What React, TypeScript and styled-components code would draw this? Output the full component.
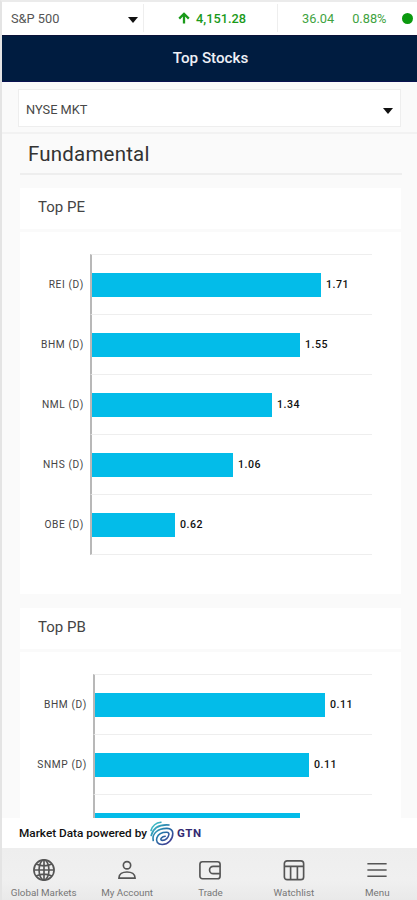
import React from 'react';
import styled, { createGlobalStyle } from 'styled-components';

const GlobalStyle = createGlobalStyle`
  * {
    box-sizing: border-box;
  }

  body {
    margin: 0;
    background: #fafafa;
    font-family: Roboto, 'Liberation Sans', sans-serif;
    color: #333;
  }
`;

const Screen = styled.div`
  display: flex;
  flex-direction: column;
  height: 900px;
  border-left: 2px solid #e4e4e4;
  border-top: 2px solid #ebebeb;
  background: #fafafa;
  overflow: hidden;
  white-space: nowrap;
`;

const Ticker = styled.div`
  display: flex;
  flex: none;
  height: 33px;
  padding: 2px 0 3px;
  background: #fff;
`;

const IndexPicker = styled.div`
  display: flex;
  align-items: center;
  justify-content: space-between;
  width: 142px;
  padding: 1px 5px 0 9px;
  border-right: 1px solid #eee;
  color: #555;
  font-size: 12.8px;
`;

const Caret = styled.span`
  width: 0;
  height: 0;
  margin-top: 2px;
  border: 5px solid transparent;
  border-top: 6px solid #111;
  border-bottom: 0;
`;

const LastPrice = styled.div`
  display: flex;
  align-items: center;
  gap: 6px;
  width: 134px;
  padding-left: 34px;
  border-right: 1px solid #eee;
  color: #1a9a1a;
  font-weight: 500;
  font-size: 12.8px;
`;

const Change = styled.div`
  display: flex;
  align-items: center;
  padding-left: 24px;
  color: #3fa33f;
  font-size: 12.8px;
`;

const Percent = styled.span`
  margin-left: 18px;
`;

const StatusDot = styled.span`
  width: 11px;
  height: 11px;
  margin-left: 16px;
  border-radius: 50%;
  background: #0b990f;
`;

const Header = styled.header`
  display: flex;
  flex: none;
  align-items: center;
  justify-content: center;
  height: 47px;
  padding: 0 0 1px 2px;
  border-top: 1px solid #0a1238;
  border-bottom: 1px solid #0a1250;
  background: #001c40;
  color: #eef0f6;
  font-size: 15.2px;
  font-weight: 500;
`;

const Filter = styled.div`
  flex: none;
  padding: 7px 16px 5px;
  border-bottom: 2px solid #f2f2f2;
`;

const MarketSelect = styled.div`
  display: flex;
  align-items: center;
  justify-content: space-between;
  height: 38px;
  padding: 3px 7px 0;
  border: 1px solid #eee;
  background: #fff;
  color: #484848;
  font-size: 12.8px;
`;

const SectionTitle = styled.h2`
  flex: none;
  height: 41px;
  margin: 0 15px 13px 18px;
  padding-left: 8px;
  border-bottom: 2px solid #eee;
  font-size: 20.5px;
  font-weight: 400;
  line-height: 41px;
  letter-spacing: 0.2px;
`;

const Content = styled.main`
  flex: 1;
  min-height: 0;
  padding: 0 16px 0 18px;
  overflow: hidden;
`;

const Card = styled.section`
  height: 406px;
  margin-bottom: 14px;
  background: #fff;
`;

const CardTitle = styled.h3`
  height: 44px;
  margin: 0 0 22px;
  padding-left: 18px;
  border-bottom: 3px solid #fafafa;
  color: #444;
  font-size: 15px;
  font-weight: 400;
  line-height: 38px;
`;

const Chart = styled.div<{ $labelWidth: number }>`
  display: grid;
  grid-template-columns: ${props => props.$labelWidth}px 1fr;
  padding-right: 29px;
`;

const Label = styled.div`
  display: flex;
  align-items: center;
  justify-content: flex-end;
  padding-right: 6px;
  color: #444;
  font-size: 10.2px;
  letter-spacing: 0.6px;
`;

const Track = styled.div<{ $last: boolean }>`
  display: flex;
  align-items: center;
  height: ${props => (props.$last ? 61 : 60)}px;
  border-left: 2px solid #b8b8b8;
  border-top: 1px solid #eee;
  border-bottom: ${props => (props.$last ? '1px solid #eee' : 'none')};
`;

const Bar = styled.div`
  height: 24px;
  background: #03bce9;
`;

const Value = styled.span`
  margin-left: 5px;
  color: #111;
  font-size: 10.6px;
  font-weight: 500;
  letter-spacing: 0.5px;
`;

const PoweredBy = styled.div`
  display: flex;
  flex: none;
  align-items: center;
  height: 30px;
  padding-left: 17px;
  background: #fff;
  color: #111;
  font-size: 11.8px;
  font-weight: 500;
`;

const Brand = styled.span`
  margin-left: 3px;
  color: #332a72;
  font-size: 11.5px;
  font-weight: 700;
  letter-spacing: 0.5px;
`;

const Nav = styled.nav`
  display: grid;
  flex: none;
  grid-template-columns: repeat(5, 83.4px);
  height: 52px;
  background: linear-gradient(#eee, #f0f0f0 60%, #e9e9e9);
`;

const NavItem = styled.div`
  display: flex;
  flex-direction: column;
  align-items: center;
  padding-top: 11px;
  color: #777;
  font-size: 9.8px;
  line-height: 12px;

  svg {
    flex: none;
    margin-bottom: 6px;
    color: #555;
  }
`;

interface Stock {
  symbol: string;
  value: string;
  width: number;
}

const charts: { title: string; labelWidth: number; stocks: Stock[] }[] = [
  {
    title: 'Top PE',
    labelWidth: 70,
    stocks: [
      { symbol: 'REI (D)', value: '1.71', width: 229 },
      { symbol: 'BHM (D)', value: '1.55', width: 208 },
      { symbol: 'NML (D)', value: '1.34', width: 180 },
      { symbol: 'NHS (D)', value: '1.06', width: 141 },
      { symbol: 'OBE (D)', value: '0.62', width: 83 },
    ],
  },
  {
    title: 'Top PB',
    labelWidth: 73,
    stocks: [
      { symbol: 'BHM (D)', value: '0.11', width: 230 },
      { symbol: 'SNMP (D)', value: '0.11', width: 214 },
      { symbol: '', value: '', width: 205 },
    ],
  },
];

const icons = {
  globe: (
    <>
      <circle cx="12" cy="12" r="11" />
      <ellipse cx="12" cy="12" rx="5.4" ry="11" />
      <path d="M12 1v22M1 12h22M3.5 5.5c5 2.4 12 2.4 17 0M3.5 18.5c5-2.4 12-2.4 17 0" />
    </>
  ),
  account: (
    <>
      <circle cx="12" cy="6.8" r="4" />
      <path d="M3.2 20.8c0-4.4 4-6.6 8.8-6.6s8.8 2.2 8.8 6.6z" />
    </>
  ),
  wallet: (
    <>
      <rect x="1" y="3" width="22" height="18.5" rx="2.8" />
      <path d="M23 8h-7.5a4 4 0 0 0 0 8H23" />
    </>
  ),
  table: (
    <>
      <rect x="1.5" y="2" width="21" height="20.5" rx="3" />
      <path d="M2 8h20M8.3 8v14M15.7 8v14" />
    </>
  ),
  menu: <path d="M1.5 5.2h21M1.5 12h21M1.5 18.8h21" />,
};

const navItems: { icon: keyof typeof icons; label: string }[] = [
  { icon: 'globe', label: 'Global Markets' },
  { icon: 'account', label: 'My Account' },
  { icon: 'wallet', label: 'Trade' },
  { icon: 'table', label: 'Watchlist' },
  { icon: 'menu', label: 'Menu' },
];

function UpArrow() {
  return (
    <svg width="12" height="12" viewBox="0 0 12 12" fill="none" stroke="#1a9a1a" strokeWidth="2.3">
      <path d="M6 11.5V2M1.2 6.6 6 1.8l4.8 4.8" />
    </svg>
  );
}

function SwirlLogo() {
  return (
    <svg width="24" height="25" viewBox="0 0 24 25" fill="none" stroke="url(#swirl)" strokeWidth="1.6" strokeLinecap="round">
      <defs>
        <linearGradient id="swirl" x1="2" y1="3" x2="20" y2="22" gradientUnits="userSpaceOnUse">
          <stop offset="0" stopColor="#45c9cc" />
          <stop offset="0.5" stopColor="#2376a8" />
          <stop offset="1" stopColor="#403a91" />
        </linearGradient>
      </defs>
      <path d="M1 9.5C2.5 4.5 6 1.7 11 1.2" />
      <path d="M1.2 14.5C3 7.5 9 3.2 19 4" />
      <path d="M3.2 19.5C1.8 12.5 8 7.2 17 7.4c3.7.2 5.8 2 5.8 5 0 6-4.7 11.1-10.6 11.1-4.6 0-6.6-3.3-5.3-6.8 1.4-3.6 5.2-5.5 9.9-5.4 1.6.1 2.3.9 2.1 2.2-.5 3.1-3.3 5.9-6.3 5.9-1.9 0-2.2-1.2-1.2-2.4.9-1.1 2.2-1.7 3.8-1.8" />
    </svg>
  );
}

function StockChart({ labelWidth, stocks }: { labelWidth: number; stocks: Stock[] }) {
  return (
    <Chart $labelWidth={labelWidth}>
      {stocks.map((stock, i) => (
        <React.Fragment key={i}>
          <Label>{stock.symbol}</Label>
          <Track $last={i === 4}>
            <Bar style={{ width: stock.width }} />
            <Value>{stock.value}</Value>
          </Track>
        </React.Fragment>
      ))}
    </Chart>
  );
}

export default function App() {
  return (
    <Screen>
      <GlobalStyle />
      <Ticker>
        <IndexPicker>
          S&amp;P 500
          <Caret />
        </IndexPicker>
        <LastPrice>
          <UpArrow />
          4,151.28
        </LastPrice>
        <Change>
          36.04
          <Percent>0.88%</Percent>
          <StatusDot />
        </Change>
      </Ticker>
      <Header>Top Stocks</Header>
      <Filter>
        <MarketSelect>
          NYSE MKT
          <Caret />
        </MarketSelect>
      </Filter>
      <SectionTitle>Fundamental</SectionTitle>
      <Content>
        {charts.map(chart => (
          <Card key={chart.title}>
            <CardTitle>{chart.title}</CardTitle>
            <StockChart labelWidth={chart.labelWidth} stocks={chart.stocks} />
          </Card>
        ))}
      </Content>
      <PoweredBy>
        Market Data powered by&nbsp;
        <SwirlLogo />
        <Brand>GTN</Brand>
      </PoweredBy>
      <Nav>
        {navItems.map(item => (
          <NavItem key={item.label}>
            <svg width="22" height="22" viewBox="0 0 24 24" fill="none" stroke="currentColor" strokeWidth="1.8">
              {icons[item.icon]}
            </svg>
            {item.label}
          </NavItem>
        ))}
      </Nav>
    </Screen>
  );
}
